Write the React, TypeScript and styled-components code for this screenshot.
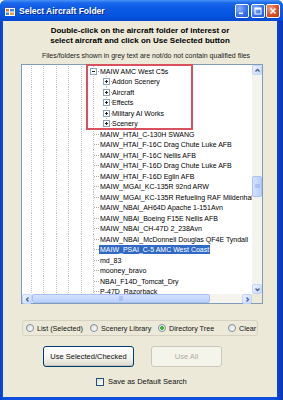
import styled, { createGlobalStyle } from "styled-components";

const GlobalStyle = createGlobalStyle`
  html, body {
    margin: 0;
    padding: 0;
    background: #ffffff;
  }
  body {
    font-family: "Liberation Sans", Arial, sans-serif;
  }
`;

const Window = styled.div`
  width: 283px;
  height: 400px;
  display: flex;
  flex-direction: column;
  background: #0b4fdc;
  border-radius: 6px 6px 0 0;
  overflow: hidden;
`;

const TitleBar = styled.div`
  height: 21px;
  flex: none;
  display: flex;
  align-items: center;
  padding: 0 3px 0 5px;
  box-sizing: border-box;
  background: linear-gradient(#4a93f8 0%, #1a68ec 14%, #0a58e4 45%, #0655e1 75%, #0447cf 100%);
  color: #ffffff;
`;

const Title = styled.span`
  flex: 1;
  margin-left: 4px;
  font: bold 8.5px "Liberation Sans", Arial, sans-serif;
  text-shadow: 1px 1px 0 #0c2a8a;
  white-space: nowrap;
`;

const CaptionButton = styled.div<{ $close?: boolean }>`
  width: 14px;
  height: 14px;
  margin-left: 1.5px;
  box-sizing: border-box;
  border: 1px solid #ffffff;
  border-radius: 2px;
  display: flex;
  align-items: center;
  justify-content: center;
  background: ${(p) =>
    p.$close
      ? "radial-gradient(circle at 30% 30%, #f0a187, #dc5128 55%, #c13a10)"
      : "radial-gradient(circle at 30% 30%, #8db2fb, #3a72ee 55%, #2356dc)"};
`;

const Frame = styled.div`
  flex: 1;
  display: flex;
  padding: 0 6px 3px 3px;
  background: linear-gradient(to right, #0a3fd0, #0b4fdc 3px, #0b4fdc 97%, #0832b8);
`;

const Client = styled.div`
  flex: 1;
  display: flex;
  flex-direction: column;
  background: #ece9d8;
`;

const Heading = styled.div`
  padding-top: 5px;
  font: bold 8px/10px "Liberation Sans", Arial, sans-serif;
  color: #000000;
  text-align: center;
`;

const Note = styled.div`
  margin-top: 5px;
  padding-left: 12px;
  font: 7px/9px "Liberation Sans", Arial, sans-serif;
  color: #1a1a1a;
  text-align: center;
  white-space: nowrap;
`;

const TreeBox = styled.div`
  position: relative;
  margin: 4px 0 0 18px;
  width: 242px;
  height: 240px;
  flex: none;
  box-sizing: border-box;
  border: 1px solid #7f9db9;
  background: #ffffff;
  display: grid;
  grid-template-columns: 1fr 10px;
  grid-template-rows: 1fr 9px;
`;

const TreeList = styled.div`
  overflow: hidden;
  padding-top: 0.75px;
`;

const Row = styled.div`
  height: 10.5px;
  display: flex;
  align-items: center;
  padding-left: 3px;
`;

const Guide = styled.span<{ $w: number; $line?: "full" | "half" | "none"; $branch?: boolean }>`
  position: relative;
  flex: none;
  width: ${(p) => p.$w}px;
  height: 100%;
  display: flex;
  align-items: center;

  &::before {
    content: "";
    display: ${(p) => (p.$line === "none" ? "none" : "block")};
    position: absolute;
    left: 6px;
    top: 0;
    bottom: ${(p) => (p.$line === "half" ? "50%" : "0")};
    width: 1px;
    background-image: linear-gradient(#c4c4c4 50%, transparent 50%);
    background-size: 1px 2px;
  }

  &::after {
    content: "";
    display: ${(p) => (p.$branch ? "block" : "none")};
    position: absolute;
    left: 7px;
    right: 0;
    top: 5px;
    height: 1px;
    background-image: linear-gradient(to right, #a8a8a8 50%, transparent 50%);
    background-size: 2px 1px;
  }
`;

const Expander = styled.svg`
  position: relative;
  z-index: 1;
  margin-left: 3px;
  flex: none;
`;

const Label = styled.span<{ $selected?: boolean }>`
  margin-left: -1px;
  padding: 0 1px;
  height: 9px;
  font: 7px/9px "Liberation Sans", Arial, sans-serif;
  white-space: nowrap;
  color: ${(p) => (p.$selected ? "#ffffff" : "#000000")};
  background: ${(p) => (p.$selected ? "#316ac5" : "transparent")};
`;

const VScroll = styled.div`
  display: flex;
  flex-direction: column;
  background: #f4f3ee;
`;

const HScroll = styled.div`
  display: flex;
  background: #f4f3ee;
`;

const ScrollButton = styled.div`
  flex: none;
  width: 10px;
  height: 10px;
  box-sizing: border-box;
  border: 1px solid #c2d3fc;
  border-radius: 2px;
  background: linear-gradient(135deg, #eef3ff, #c6d6fc);
  display: flex;
  align-items: center;
  justify-content: center;
`;

const Track = styled.div<{ $vertical?: boolean; $offset: number }>`
  flex: 1;
  display: flex;
  flex-direction: ${(p) => (p.$vertical ? "column" : "row")};
  ${(p) => (p.$vertical ? `padding-top: ${p.$offset}px;` : `padding-left: ${p.$offset}px;`)}
`;

const Thumb = styled.div<{ $vertical?: boolean; $size: number }>`
  flex: none;
  box-sizing: border-box;
  ${(p) => (p.$vertical ? `height: ${p.$size}px; width: 10px;` : `width: ${p.$size}px; height: 9px;`)}
  border: 1px solid #a9c0f4;
  border-radius: 2px;
  background: ${(p) =>
    p.$vertical
      ? "linear-gradient(to right, #d4e1fd, #bcd0fb)"
      : "linear-gradient(#d4e1fd, #bcd0fb)"};
  display: flex;
  align-items: center;
  justify-content: center;
`;

const Corner = styled.div`
  background: #ece9d8;
`;

const Annotation = styled.div`
  position: absolute;
  left: 64px;
  top: -1px;
  width: 107px;
  height: 66px;
  box-sizing: border-box;
  border: 2px solid #d9505f;
  pointer-events: none;
`;

const RadioGroup = styled.div`
  margin: 16px 0 0 19px;
  width: 236px;
  height: 16px;
  flex: none;
  box-sizing: border-box;
  border: 1px solid #d5d2c2;
  border-radius: 3px;
  display: flex;
  align-items: center;
  padding-left: 3px;
`;

const RadioOption = styled.label<{ $w?: number }>`
  display: flex;
  align-items: center;
  gap: 3px;
  ${(p) => (p.$w ? `width: ${p.$w}px;` : "")}
  flex: none;
  font: 7.2px "Liberation Sans", Arial, sans-serif;
  color: #111111;
  white-space: nowrap;
`;

const RadioDot = styled.span<{ $checked?: boolean }>`
  width: 8px;
  height: 8px;
  flex: none;
  box-sizing: border-box;
  border-radius: 50%;
  border: 1px solid #7c8ea6;
  background: ${(p) =>
    p.$checked
      ? "radial-gradient(circle, #3fb33f 0 1.8px, #f4f4f0 2.2px)"
      : "linear-gradient(135deg, #dcdcd6, #ffffff)"};
`;

const ButtonRow = styled.div`
  margin-top: 10px;
  padding-left: 40px;
  display: flex;
  gap: 17px;
`;

const PushButton = styled.div<{ $w: number; $disabled?: boolean }>`
  width: ${(p) => p.$w}px;
  height: 21px;
  box-sizing: border-box;
  border: 1px solid ${(p) => (p.$disabled ? "#cbc8bb" : "#003c74")};
  border-radius: 3px;
  display: flex;
  align-items: center;
  justify-content: center;
  font: 7.5px "Liberation Sans", Arial, sans-serif;
  color: ${(p) => (p.$disabled ? "#b2ae9e" : "#111111")};
  background: ${(p) =>
    p.$disabled ? "#f5f4ea" : "linear-gradient(#ffffff, #f3f2ec 60%, #dcd8cc)"};
  box-shadow: ${(p) => (p.$disabled ? "none" : "inset 0 -1px 0 #c9c5b5")};
`;

const CheckRow = styled.div`
  margin-top: 10px;
  padding-left: 93px;
  display: flex;
  align-items: center;
  gap: 4px;
  font: 7.5px "Liberation Sans", Arial, sans-serif;
  color: #111111;
`;

const CheckBox = styled.span`
  width: 8px;
  height: 8px;
  box-sizing: border-box;
  border: 1px solid #1c5180;
  background: linear-gradient(135deg, #dcdcd6, #ffffff);
`;

type Node = {
  label: string;
  child?: boolean;
  kind?: "open" | "closed";
  last?: boolean;
  selected?: boolean;
};

const nodes: Node[] = [
  { label: "MAIW AMC West C5s", kind: "open" },
  { label: "Addon Scenery", child: true, kind: "closed" },
  { label: "Aircraft", child: true, kind: "closed" },
  { label: "Effects", child: true, kind: "closed" },
  { label: "Military AI Works", child: true, kind: "closed" },
  { label: "Scenery", child: true, kind: "closed", last: true },
  { label: "MAIW_HTAI_C-130H SWANG" },
  { label: "MAIW_HTAI_F-16C Drag Chute Luke AFB" },
  { label: "MAIW_HTAI_F-16C Nellis AFB" },
  { label: "MAIW_HTAI_F-16D Drag Chute Luke AFB" },
  { label: "MAIW_HTAI_F-16D Eglin AFB" },
  { label: "MAIW_MGAI_KC-135R 92nd ARW" },
  { label: "MAIW_MGAI_KC-135R Refueling RAF Mildenhall" },
  { label: "MAIW_NBAI_AH64D Apache 1-151Avn" },
  { label: "MAIW_NBAI_Boeing F15E Nellis AFB" },
  { label: "MAIW_NBAI_CH-47D 2_238Avn" },
  { label: "MAIW_NBAI_McDonnell Douglas QF4E Tyndall" },
  { label: "MAIW_PSAI_C-5 AMC West Coast", selected: true },
  { label: "md_83" },
  { label: "mooney_bravo" },
  { label: "NBAI_F14D_Tomcat_Dry" },
  { label: "P-47D_Razorback" },
];

const guideWidths = [12, 13, 12, 13, 12];

function ExpandBox({ open }: { open: boolean }) {
  return (
    <Expander width="7" height="7" viewBox="0 0 7 7">
      <rect x="0.5" y="0.5" width="6" height="6" fill="#ffffff" stroke="#8fa3bd" />
      <line x1="2" y1="3.5" x2="5" y2="3.5" stroke="#222" strokeWidth="1" />
      {!open && <line x1="3.5" y1="2" x2="3.5" y2="5" stroke="#222" strokeWidth="1" />}
    </Expander>
  );
}

function TreeRow({ node }: { node: Node }) {
  return (
    <Row>
      {guideWidths.map((w, i) => (
        <Guide key={i} $w={w} $line="full" />
      ))}
      {node.child ? (
        <>
          <Guide $w={13} $line="full" />
          <Guide $w={12} $line={node.last ? "half" : "full"} $branch>
            <ExpandBox open={false} />
          </Guide>
        </>
      ) : (
        <Guide $w={13} $line="full" $branch>
          {node.kind && <ExpandBox open={node.kind === "open"} />}
        </Guide>
      )}
      <Label $selected={node.selected}>{node.label}</Label>
    </Row>
  );
}

function Arrow({ dir }: { dir: "up" | "down" | "left" | "right" }) {
  const paths = {
    up: "M1.5 4.5 L3.5 2.5 L5.5 4.5",
    down: "M1.5 2.5 L3.5 4.5 L5.5 2.5",
    left: "M4.5 1.5 L2.5 3.5 L4.5 5.5",
    right: "M2.5 1.5 L4.5 3.5 L2.5 5.5",
  };
  return (
    <svg width="7" height="7" viewBox="0 0 7 7">
      <path d={paths[dir]} fill="none" stroke="#4d6185" strokeWidth="1.3" />
    </svg>
  );
}

function AppIcon() {
  return (
    <svg width="10" height="10" viewBox="0 0 10 10">
      <rect x="0" y="0" width="10" height="10" fill="#ffffff" />
      <rect x="0" y="0" width="10" height="2" fill="#2a58c8" />
      <rect x="1" y="3" width="3" height="2.5" fill="#e8742a" />
      <rect x="5" y="3" width="4" height="2.5" fill="#4a7ee0" />
      <rect x="1" y="6.5" width="3" height="2.5" fill="#4a7ee0" />
      <rect x="5" y="6.5" width="4" height="2.5" fill="#e8a02a" />
    </svg>
  );
}

export default function App() {
  return (
    <>
      <GlobalStyle />
      <Window>
        <TitleBar>
          <AppIcon />
          <Title>Select Aircraft Folder</Title>
          <CaptionButton>
            <svg width="8" height="8" viewBox="0 0 8 8">
              <rect x="1" y="5.5" width="4" height="1.6" fill="#ffffff" />
            </svg>
          </CaptionButton>
          <CaptionButton>
            <svg width="8" height="8" viewBox="0 0 8 8">
              <rect x="1" y="1" width="6" height="6" fill="none" stroke="#ffffff" strokeWidth="1" />
              <rect x="1" y="1" width="6" height="1.6" fill="#ffffff" />
            </svg>
          </CaptionButton>
          <CaptionButton $close>
            <svg width="8" height="8" viewBox="0 0 8 8">
              <path d="M1.5 1.5 L6.5 6.5 M6.5 1.5 L1.5 6.5" stroke="#ffffff" strokeWidth="1.5" />
            </svg>
          </CaptionButton>
        </TitleBar>
        <Frame>
          <Client>
            <Heading>
              Double-click on the aircraft folder of interest or
              <br />
              select aircraft and click on Use Selected button
            </Heading>
            <Note>Files/folders shown in grey text are not/do not contain qualified files</Note>
            <TreeBox>
              <TreeList>
                {nodes.map((n) => (
                  <TreeRow key={n.label} node={n} />
                ))}
              </TreeList>
              <VScroll>
                <ScrollButton>
                  <Arrow dir="up" />
                </ScrollButton>
                <Track $vertical $offset={101}>
                  <Thumb $vertical $size={21}>
                    <svg width="5" height="5" viewBox="0 0 5 5">
                      <path d="M0 1h5M0 3h5" stroke="#8faaf0" strokeWidth="1" />
                    </svg>
                  </Thumb>
                </Track>
                <ScrollButton>
                  <Arrow dir="down" />
                </ScrollButton>
              </VScroll>
              <HScroll>
                <ScrollButton>
                  <Arrow dir="left" />
                </ScrollButton>
                <Track $offset={0}>
                  <Thumb $size={178}>
                    <svg width="5" height="5" viewBox="0 0 5 5">
                      <path d="M1 0v5M3 0v5" stroke="#8faaf0" strokeWidth="1" />
                    </svg>
                  </Thumb>
                </Track>
                <ScrollButton>
                  <Arrow dir="right" />
                </ScrollButton>
              </HScroll>
              <Corner />
              <Annotation />
            </TreeBox>
            <RadioGroup>
              <RadioOption $w={64}>
                <RadioDot />
                List (Selected)
              </RadioOption>
              <RadioOption $w={68}>
                <RadioDot />
                Scenery Library
              </RadioOption>
              <RadioOption $w={70}>
                <RadioDot $checked />
                Directory Tree
              </RadioOption>
              <RadioOption>
                <RadioDot />
                Clear
              </RadioOption>
            </RadioGroup>
            <ButtonRow>
              <PushButton $w={91}>Use Selected/Checked</PushButton>
              <PushButton $w={71} $disabled>
                Use All
              </PushButton>
            </ButtonRow>
            <CheckRow>
              <CheckBox />
              Save as Default Search
            </CheckRow>
          </Client>
        </Frame>
      </Window>
    </>
  );
}
